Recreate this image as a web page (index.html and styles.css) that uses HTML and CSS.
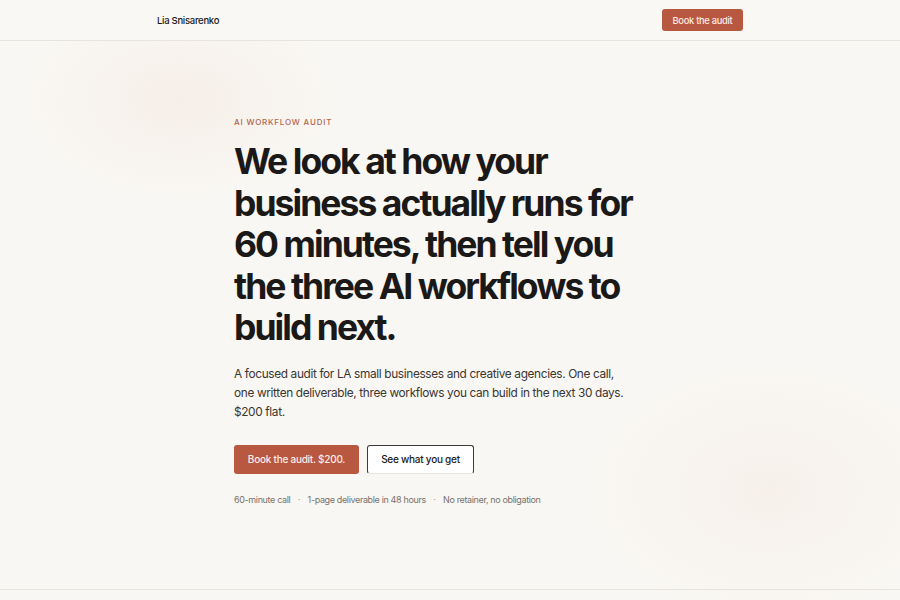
FILE: index.html
```html
<!DOCTYPE html>
<html lang="en">
<head>
<meta charset="utf-8">
<title>Lia Snisarenko — AI Workflow Audit</title>
<link rel="stylesheet" href="styles.css">
</head>
<body>
<header class="nav">
  <div class="nav-inner">
    <span class="brand">Lia Snisarenko</span>
    <a class="btn btn-primary btn-sm" href="#">Book the audit</a>
  </div>
</header>
<main class="hero">
  <div class="hero-inner">
    <p class="eyebrow">AI WORKFLOW AUDIT</p>
    <h1 class="title">We look at how your business actually runs for 60 minutes, then tell you the three AI workflows to build next.</h1>
    <p class="lede">A focused audit for LA small businesses and creative agencies. One call, one written deliverable, three workflows you can build in the next 30 days. $200 flat.</p>
    <div class="actions">
      <a class="btn btn-primary btn-lg" href="#">Book the audit. $200.</a>
      <a class="btn btn-outline btn-lg" href="#">See what you get</a>
    </div>
    <p class="meta"><span>60-minute call</span><span class="dot">·</span><span>1-page deliverable in 48 hours</span><span class="dot">·</span><span>No retainer, no obligation</span></p>
  </div>
</main>
</body>
</html>
```
FILE: styles.css
```css
* { box-sizing: border-box; }
html, body { margin: 0; padding: 0; }
body {
  font-family: Inter, "Liberation Sans", sans-serif;
  color: #1b1917;
  background-color: #f9f7f3;
  background-image:
    radial-gradient(ellipse 220px 140px at 180px 100px, rgba(241, 226, 215, 0.4), rgba(241, 226, 215, 0) 70%),
    radial-gradient(ellipse 260px 180px at 770px 490px, rgba(242, 230, 220, 0.4), rgba(242, 230, 220, 0) 70%);
  height: 600px;
  overflow: hidden;
}
a { text-decoration: none; }

.nav {
  height: 41px;
  border-bottom: 1px solid #e7e3dd;
  background: #faf8f5;
}
.nav-inner {
  width: 586px;
  margin: 0 auto;
  height: 40px;
  display: flex;
  align-items: center;
  justify-content: space-between;
}
.brand {
  font-size: 9.5px;
  font-weight: 500;
  letter-spacing: -0.03em;
  color: #1b1917;
}

.btn {
  display: inline-flex;
  align-items: center;
  justify-content: center;
  border-radius: 3px;
  font-weight: 500;
}
.btn-primary {
  background: #b85840;
  color: #fbece6;
}
.btn-sm {
  width: 81px;
  height: 22px;
  font-size: 9.3px;
  letter-spacing: -0.03em;
}
.btn-lg {
  height: 29px;
  font-size: 10px;
  letter-spacing: -0.025em;
}

.hero {
  height: 549px;
  border-bottom: 1px solid #e7e3dd;
}
.hero-inner {
  width: 432px;
  margin: 0 auto;
  padding-top: 76px;
}
.eyebrow {
  margin: 0;
  font-size: 8px;
  line-height: 10px;
  font-weight: 500;
  letter-spacing: 0.1em;
  color: #b3654f;
}
.title {
  max-width: 420px;
  margin: 14px 0 0;
  font-size: 35.5px;
  line-height: 41.5px;
  font-weight: 750;
  letter-spacing: -0.055em;
  color: #1b1917;
}
.lede {
  max-width: 395px;
  margin: 16px 0 0;
  font-size: 11.85px;
  line-height: 19px;
  letter-spacing: -0.03em;
  color: #3a3632;
}
.actions {
  display: flex;
  gap: 8px;
  margin-top: 23px;
}
.btn-lg.btn-primary { width: 125px; }
.btn-outline {
  width: 107px;
  background: #ffffff;
  color: #1b1917;
  border: 1px solid #3d3a37;
  border-bottom-color: #e8e5e1;
}
.meta {
  margin: 20px 0 0;
  font-size: 9px;
  line-height: 12px;
  letter-spacing: -0.04em;
  color: #77726d;
  display: flex;
  gap: 7.5px;
}
.meta .dot { color: #a8a29c; }
```
